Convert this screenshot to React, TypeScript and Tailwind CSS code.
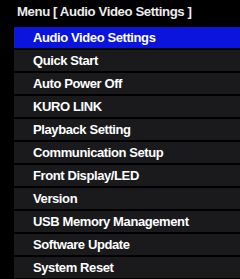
const items = [
  "Audio Video Settings",
  "Quick Start",
  "Auto Power Off",
  "KURO LINK",
  "Playback Setting",
  "Communication Setup",
  "Front Display/LED",
  "Version",
  "USB Memory Management",
  "Software Update",
  "System Reset",
];

export default function App() {
  return (
    <div className="w-[240px] h-[279px] overflow-hidden bg-black font-['Liberation_Sans',Arial,sans-serif] font-bold tracking-[-0.4px]">
      {/* Title */}
      <div className="h-[27px] pl-[17px] pt-[4px] text-[13.2px] leading-[16px] text-[#ececec]">
        Menu [ Audio Video Settings ]
      </div>

      {/* Menu list */}
      <div className="flex flex-col gap-[2px] pl-[14px]">
        {items.map((item, i) => (
          <div
            key={item}
            className={`h-[21px] shrink-0 pl-[19px] flex items-center text-[13px] text-white ${
              i === 0 ? "bg-[#0a14dc]" : "bg-[#1a1a1d]"
            }`}
          >
            {item}
          </div>
        ))}
      </div>
    </div>
  );
}
